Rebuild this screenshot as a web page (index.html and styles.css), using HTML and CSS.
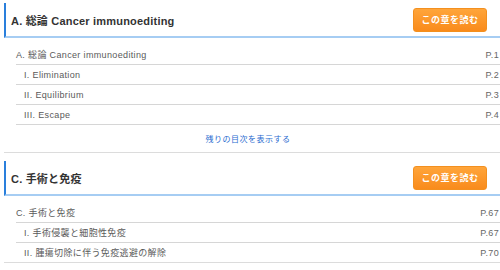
FILE: index.html
```html
<!DOCTYPE html>
<html lang="ja">
<head>
<meta charset="UTF-8">
<meta name="viewport" content="width=device-width, initial-scale=1.0">
<title>目次</title>
<link rel="stylesheet" href="styles.css">
</head>
<body>
<div class="toc">
    <div class="chapter">
        <div class="chapter-head">
            <h2>A. 総論 Cancer immunoediting</h2>
            <a class="read-btn" href="#">この章を読む</a>
        </div>
        <ul class="items">
            <li><span>A. 総論 Cancer immunoediting</span><span class="page">P.1</span></li>
            <li class="sub"><span>I. Elimination</span><span class="page">P.2</span></li>
            <li class="sub"><span>II. Equilibrium</span><span class="page">P.3</span></li>
            <li class="sub"><span>III. Escape</span><span class="page">P.4</span></li>
        </ul>
        <div class="more"><a href="#">残りの目次を表示する</a></div>
    </div>

    <div class="chapter">
        <div class="chapter-head">
            <h2>C. 手術と免疫</h2>
            <a class="read-btn" href="#">この章を読む</a>
        </div>
        <ul class="items">
            <li><span>C. 手術と免疫</span><span class="page">P.67</span></li>
            <li class="sub"><span>I. 手術侵襲と細胞性免疫</span><span class="page">P.67</span></li>
            <li class="sub"><span>II. 腫瘍切除に伴う免疫逃避の解除</span><span class="page">P.70</span></li>
        </ul>
    </div>
</div>
</body>
</html>
```

FILE: styles.css
```css
body {
    font-family: "Liberation Sans", Arial, "Noto Sans CJK JP", sans-serif;
    background-color: #fff;
    margin: 0;
    padding: 0;
}
.toc {
    padding: 3px 0 0 4px;
}
.chapter {
    border-bottom: 1px solid #dcdcdc;
    margin-bottom: 8px;
}
.chapter-head {
    display: flex;
    align-items: center;
    justify-content: space-between;
    height: 33px;
    border-left: 2px solid #2a7fdc;
    border-bottom: 2px solid #a6cdf3;
}
.chapter-head h2 {
    margin: 0;
    padding-left: 5px;
    font-size: 11px;
    font-weight: bold;
    letter-spacing: 0.2px;
    color: #333;
}
.read-btn {
    display: flex;
    align-items: center;
    justify-content: center;
    width: 72px;
    height: 22px;
    margin-right: 13px;
    border: 1px solid #f3901f;
    border-radius: 3px;
    background: linear-gradient(#ffa53a, #f98b1c);
    color: #fff;
    font-size: 9px;
    font-weight: bold;
    letter-spacing: 0.5px;
    text-decoration: none;
}
.items {
    list-style: none;
    margin: 7px 0 0 12px;
    padding: 0;
}
.items li {
    display: flex;
    align-items: center;
    justify-content: space-between;
    height: 19px;
    padding-right: 1px;
    border-bottom: 1px solid #d6d6d6;
    font-size: 9px;
    letter-spacing: 0.35px;
    color: #5a5a5a;
}
.items li.sub {
    padding-left: 8px;
}
.items li:last-child {
    border-bottom: none;
}
.items li .page {
    color: #666;
}
.more {
    height: 27px;
    display: flex;
    align-items: center;
    justify-content: center;
    margin-left: 12px;
    padding-right: 20px;
    border-top: 1px solid #d6d6d6;
}
.more a {
    font-size: 8px;
    letter-spacing: 0.5px;
    color: #2a6cd0;
    text-decoration: none;
}
```
